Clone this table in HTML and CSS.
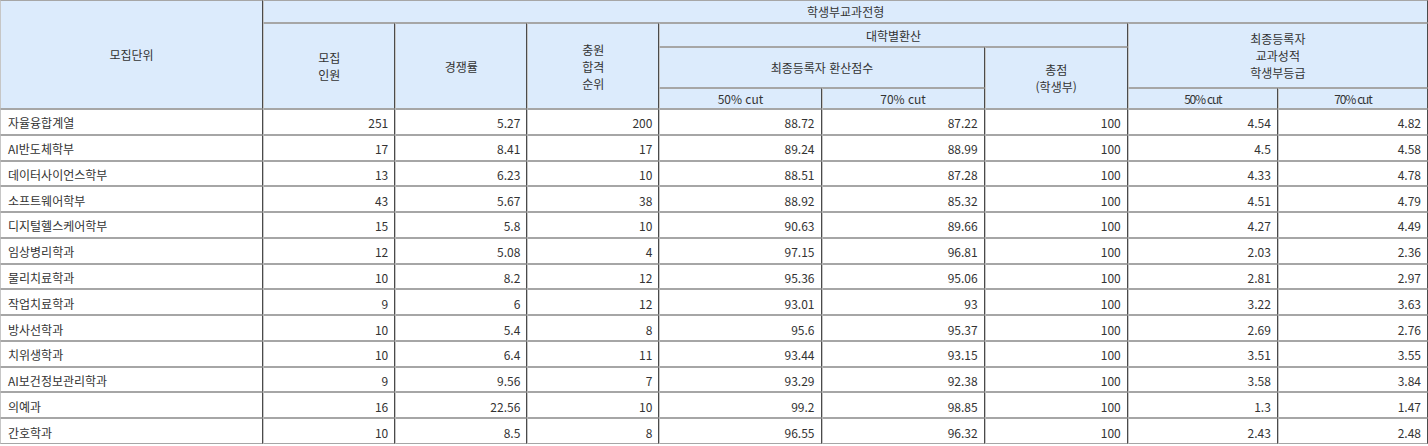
FILE: index.html
```html
<!DOCTYPE html>
<html lang="ko">
<head>
<meta charset="utf-8">
<link rel="stylesheet" href="styles.css">
</head>
<body>
<table class="grid">
  <colgroup>
    <col class="c-unit"><col class="c-n"><col class="c-n"><col class="c-n">
    <col class="c-s"><col class="c-s2"><col class="c-t"><col class="c-g"><col class="c-g">
  </colgroup>
  <thead>
    <tr class="h1">
      <th rowspan="4">모집단위</th>
      <th colspan="8">학생부교과전형</th>
    </tr>
    <tr class="h2">
      <th rowspan="3">모집<br>인원</th>
      <th rowspan="3">경쟁률</th>
      <th rowspan="3">충원<br>합격<br>순위</th>
      <th colspan="3">대학별환산</th>
      <th colspan="2" rowspan="2">최종등록자<br>교과성적<br>학생부등급</th>
    </tr>
    <tr class="h3">
      <th colspan="2">최종등록자 환산점수</th>
      <th rowspan="2">총점<br>(학생부)</th>
    </tr>
    <tr class="h4">
      <th>50% cut</th>
      <th>70% cut</th>
      <th class="narrow">50% cut</th>
      <th class="narrow">70% cut</th>
    </tr>
  </thead>
  <tbody>
    <tr><td>자율융합계열</td><td>251</td><td>5.27</td><td>200</td><td>88.72</td><td>87.22</td><td>100</td><td>4.54</td><td>4.82</td></tr>
    <tr><td>AI반도체학부</td><td>17</td><td>8.41</td><td>17</td><td>89.24</td><td>88.99</td><td>100</td><td>4.5</td><td>4.58</td></tr>
    <tr><td>데이터사이언스학부</td><td>13</td><td>6.23</td><td>10</td><td>88.51</td><td>87.28</td><td>100</td><td>4.33</td><td>4.78</td></tr>
    <tr><td>소프트웨어학부</td><td>43</td><td>5.67</td><td>38</td><td>88.92</td><td>85.32</td><td>100</td><td>4.51</td><td>4.79</td></tr>
    <tr><td>디지털헬스케어학부</td><td>15</td><td>5.8</td><td>10</td><td>90.63</td><td>89.66</td><td>100</td><td>4.27</td><td>4.49</td></tr>
    <tr><td>임상병리학과</td><td>12</td><td>5.08</td><td>4</td><td>97.15</td><td>96.81</td><td>100</td><td>2.03</td><td>2.36</td></tr>
    <tr><td>물리치료학과</td><td>10</td><td>8.2</td><td>12</td><td>95.36</td><td>95.06</td><td>100</td><td>2.81</td><td>2.97</td></tr>
    <tr><td>작업치료학과</td><td>9</td><td>6</td><td>12</td><td>93.01</td><td>93</td><td>100</td><td>3.22</td><td>3.63</td></tr>
    <tr><td>방사선학과</td><td>10</td><td>5.4</td><td>8</td><td>95.6</td><td>95.37</td><td>100</td><td>2.69</td><td>2.76</td></tr>
    <tr><td>치위생학과</td><td>10</td><td>6.4</td><td>11</td><td>93.44</td><td>93.15</td><td>100</td><td>3.51</td><td>3.55</td></tr>
    <tr><td>AI보건정보관리학과</td><td>9</td><td>9.56</td><td>7</td><td>93.29</td><td>92.38</td><td>100</td><td>3.58</td><td>3.84</td></tr>
    <tr><td>의예과</td><td>16</td><td>22.56</td><td>10</td><td>99.2</td><td>98.85</td><td>100</td><td>1.3</td><td>1.47</td></tr>
    <tr><td>간호학과</td><td>10</td><td>8.5</td><td>8</td><td>96.55</td><td>96.32</td><td>100</td><td>2.43</td><td>2.48</td></tr>
  </tbody>
</table>
</body>
</html>
```
FILE: styles.css
```css
html, body {
  margin: 0;
  padding: 0;
  background: #ffffff;
}

.grid {
  table-layout: fixed;
  border-collapse: separate;
  border-spacing: 0;
  width: 1428px;
  font-family: "Noto Sans CJK KR", "Noto Sans", sans-serif;
  font-size: 12px;
  color: #333333;
}

.c-unit { width: 263px; }
.c-n { width: 132px; }
.c-s { width: 162px; }
.c-s2 { width: 163px; }
.c-t { width: 143px; }
.c-g { width: 150px; }

.grid th,
.grid td {
  border-left: 1px solid #c6c6c6;
  border-right: 1px solid #4a4a4a;
  border-top: 1px solid #a6a6a6;
  border-bottom: 1px solid #a6a6a6;
  padding: 0 5px;
  line-height: 17px;
  overflow: hidden;
  white-space: nowrap;
}

.grid th {
  background: #dcebfc;
  font-weight: normal;
  text-align: center;
  vertical-align: middle;
}

.grid th.narrow {
  letter-spacing: -1.2px;
}

.h1 { height: 23px; }
.h2 { height: 24px; }
.h3 { height: 41px; }
.h4 { height: 21px; }

.grid tbody tr { height: 25.77px; }

.grid td {
  text-align: right;
  padding: 2px 6px 0 7px;
}

.grid td:first-child {
  text-align: left;
}
```
